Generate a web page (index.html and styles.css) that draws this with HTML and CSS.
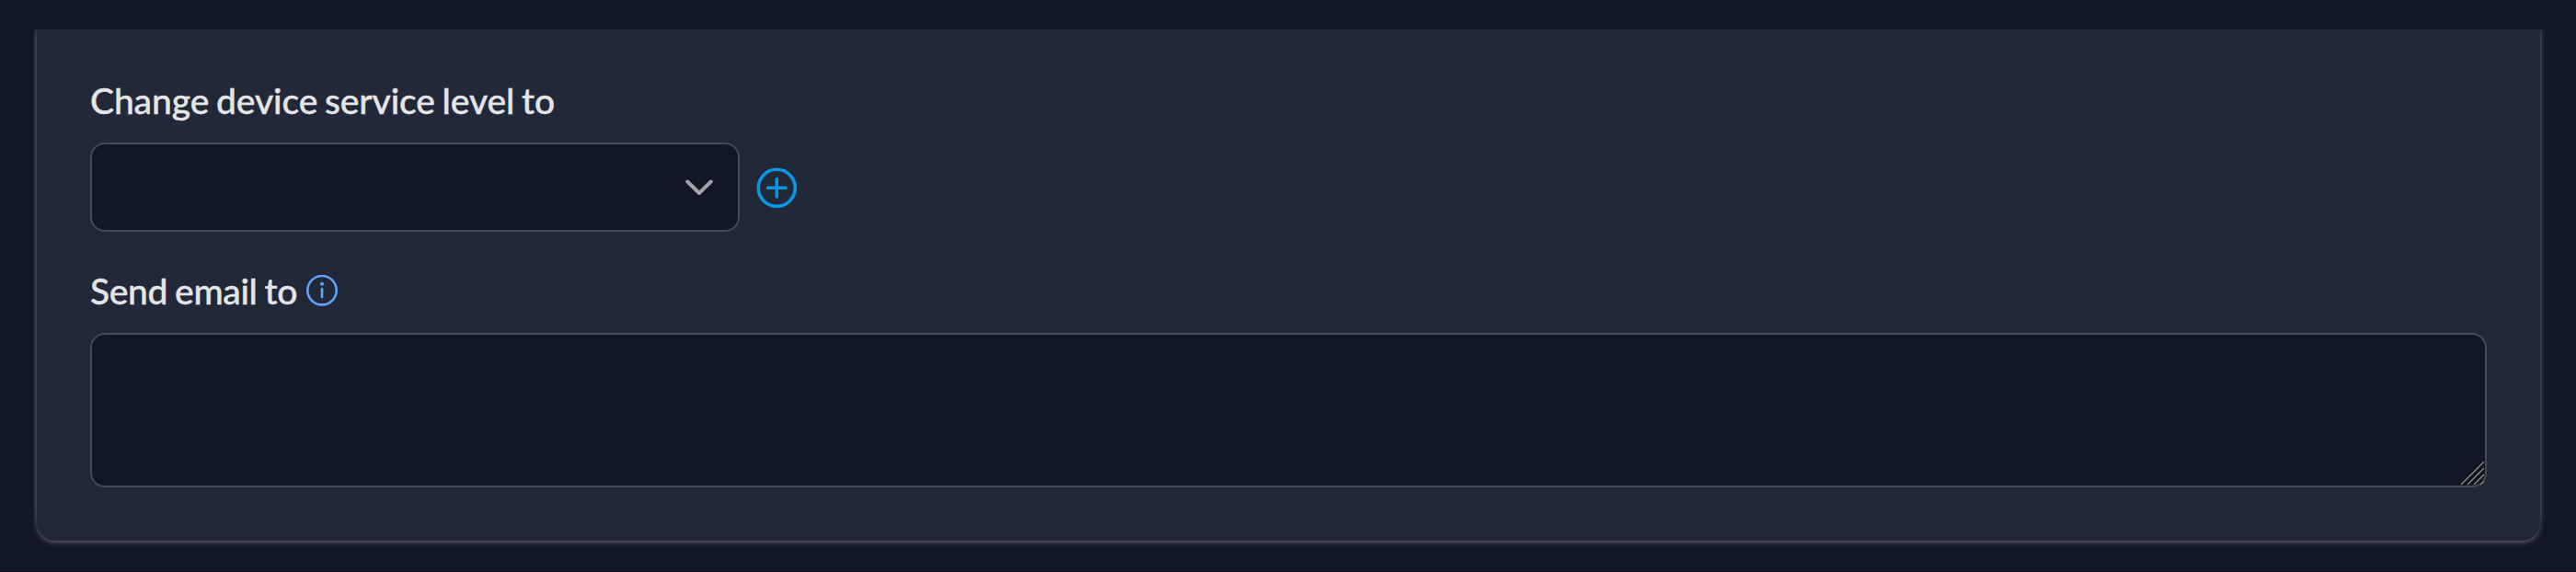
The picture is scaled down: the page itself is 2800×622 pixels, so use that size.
FILE: index.html
```html
<!DOCTYPE html>
<html lang="en">
<head>
    <meta charset="UTF-8">
    <meta name="viewport" content="width=device-width, initial-scale=1.0">
    <title>Device actions</title>
    <link rel="stylesheet" href="styles.css">
</head>
<body>
    <div class="viewport">
        <form class="card">
            <div class="field">
                <div class="label-row">
                    <label class="label label-level" for="level">Change device service level to</label>
                </div>
                <div class="select-row">
                    <button type="button" class="select" id="level">
                        <svg class="chevron" viewBox="0 0 30 18">
                            <path d="M2.3 2.5 L15 15 L27.7 2.5"/>
                        </svg>
                    </button>
                    <svg class="add-icon" viewBox="0 0 44 44">
                        <circle cx="22.3" cy="22.3" r="20"/>
                        <path d="M22.3 12.6 V32 M12.6 22.3 H32"/>
                    </svg>
                </div>
            </div>
            <div class="field">
                <div class="label-row">
                    <label class="label label-email" for="email">Send email to</label>
                    <svg class="info-icon" viewBox="0 0 34 34">
                        <circle class="ring" cx="17" cy="16.7" r="15.7"/>
                        <circle class="dot" cx="17" cy="9.8" r="2"/>
                        <path d="M17 15 V24"/>
                    </svg>
                </div>
                <div class="textarea-wrap">
                    <textarea class="textarea" id="email"></textarea>
                    <svg class="grip" viewBox="0 0 28 28">
                        <path class="grip-dark" d="M0 25 L25 0 M7 25 L25 7 M14 25 L25 14 M21 25 L25 21"/>
                        <path class="grip-light" d="M1 26 L26 1 M8 26 L26 8 M15 26 L26 15 M22 26 L26 22"/>
                    </svg>
                </div>
            </div>
        </form>
    </div>
</body>
</html>
```
FILE: styles.css
```css
* {
    box-sizing: border-box;
}

body {
    margin: 0;
    height: 622px;
    padding: 32px 34px 0 36px;
    overflow: hidden;
    background: #111726;
    border-bottom: 1px solid #0c0a18;
    font-family: Lato, "Open Sans", sans-serif;
    color: #e4e5e6;
}

.viewport {
    height: 589px;
    overflow: hidden;
}

.card {
    height: 556px;
    margin: 0 5px 0 4px;
    padding: 53px 58px 0;
    background: #212938;
    border-radius: 0 0 20px 20px;
    box-shadow: 0 -12px 6px 0 rgba(115, 115, 120, 0.5), 0 2px 6px 0 rgba(115, 115, 120, 0.6), 0 2px 4px -2px rgba(115, 115, 120, 0.6);
}

.field {
    margin-bottom: 40px;
}

.label-row {
    display: flex;
    align-items: center;
    height: 48px;
    margin-bottom: 22px;
}

.label {
    font-size: 39px;
    font-weight: 500;
    line-height: 48px;
    white-space: nowrap;
    -webkit-text-stroke: 0.4px #e4e5e6;
}

.label-level {
    letter-spacing: -0.1px;
    word-spacing: -2px;
}

.label-email {
    width: 235px;
    letter-spacing: -0.35px;
    word-spacing: -1.5px;
}

.select-row {
    display: flex;
    align-items: center;
    gap: 18px;
}

.select {
    display: flex;
    justify-content: flex-end;
    align-items: center;
    width: 706px;
    height: 97px;
    padding: 0 27px 0 0;
    background: #111726;
    border: 2px solid #434a58;
    border-radius: 16px;
}

.chevron {
    width: 30px;
    height: 18px;
    fill: none;
    stroke: #a2a3a9;
    stroke-width: 4;
    stroke-linecap: round;
    stroke-linejoin: round;
}

.add-icon {
    width: 44px;
    height: 44px;
    fill: none;
    stroke: #0a97e1;
    stroke-width: 3.6;
    stroke-linecap: round;
}

.info-icon {
    width: 34px;
    height: 34px;
    fill: none;
    stroke: #60a5fa;
    stroke-width: 2.6;
    stroke-linecap: round;
}

.info-icon .dot {
    fill: #60a5fa;
    stroke: none;
}

.textarea-wrap {
    position: relative;
    height: 168px;
}

.textarea {
    display: block;
    width: 100%;
    height: 168px;
    padding: 16px 24px;
    background: #111726;
    border: 2px solid #434a58;
    border-radius: 16px;
    color: inherit;
    font: inherit;
    resize: none;
}

/* resize handle in the corner of the textarea */
.grip {
    position: absolute;
    right: 1px;
    bottom: 1px;
    width: 28px;
    height: 28px;
    fill: none;
    stroke-width: 1.4;
}

.grip-dark {
    stroke: #10131a;
    stroke-width: 3;
}

.grip-light {
    stroke: #8b8d91;
}
```
